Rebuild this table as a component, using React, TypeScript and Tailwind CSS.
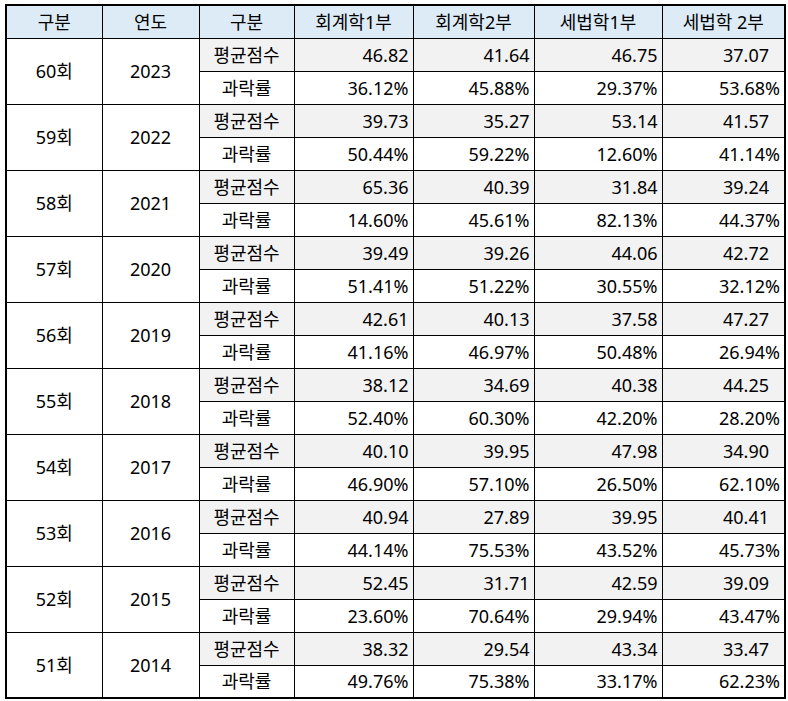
const rows = [
  ['60회', '2023', ['46.82', '41.64', '46.75', '37.07'], ['36.12%', '45.88%', '29.37%', '53.68%']],
  ['59회', '2022', ['39.73', '35.27', '53.14', '41.57'], ['50.44%', '59.22%', '12.60%', '41.14%']],
  ['58회', '2021', ['65.36', '40.39', '31.84', '39.24'], ['14.60%', '45.61%', '82.13%', '44.37%']],
  ['57회', '2020', ['39.49', '39.26', '44.06', '42.72'], ['51.41%', '51.22%', '30.55%', '32.12%']],
  ['56회', '2019', ['42.61', '40.13', '37.58', '47.27'], ['41.16%', '46.97%', '50.48%', '26.94%']],
  ['55회', '2018', ['38.12', '34.69', '40.38', '44.25'], ['52.40%', '60.30%', '42.20%', '28.20%']],
  ['54회', '2017', ['40.10', '39.95', '47.98', '34.90'], ['46.90%', '57.10%', '26.50%', '62.10%']],
  ['53회', '2016', ['40.94', '27.89', '39.95', '40.41'], ['44.14%', '75.53%', '43.52%', '45.73%']],
  ['52회', '2015', ['52.45', '31.71', '42.59', '39.09'], ['23.60%', '70.64%', '29.94%', '43.47%']],
  ['51회', '2014', ['38.32', '29.54', '43.34', '33.47'], ['49.76%', '75.38%', '33.17%', '62.23%']],
] as const

const headers = ['구분', '연도', '구분', '회계학1부', '회계학2부', '세법학1부', '세법학 2부']
const widths = ['w-[96px]', 'w-[97px]', 'w-[95px]', 'w-[119px]', 'w-[121px]', 'w-[128px]', 'w-[123px]']

export default function App() {
  return (
    <div className="min-h-screen bg-white pl-[5px] pt-[4px] font-['Noto_Sans','Noto_Sans_CJK_KR',sans-serif] text-[18px] text-black">
      <table className="table-fixed border-collapse border-2 border-black">
        <colgroup>
          {widths.map((w, i) => (
            <col key={i} className={w} />
          ))}
        </colgroup>
        <thead>
          <tr className="h-[33px] bg-[#ddebf7]">
            {headers.map((h, i) => (
              <th key={i} className="border border-black p-0 text-center font-normal leading-none">
                {h}
              </th>
            ))}
          </tr>
        </thead>
        <tbody>
          {rows.map(([round, year, avg, fail]) => (
            <>
              <tr key={round + 'a'} className="h-[33px]">
                <td rowSpan={2} className="border border-black p-0 text-center leading-none">
                  {round}
                </td>
                <td rowSpan={2} className="border border-black p-0 text-center leading-none">
                  {year}
                </td>
                <td className="border border-black bg-[#f2f2f2] p-0 text-center leading-none">평균점수</td>
                {avg.map((v, i) => (
                  <td
                    key={i}
                    className={
                      i === 3
                        ? 'border border-black bg-[#f2f2f2] py-0 pl-0 pr-[15px] text-right leading-none'
                        : 'border border-black bg-[#f2f2f2] py-0 pl-0 pr-[4px] text-right leading-none'
                    }
                  >
                    {v}
                  </td>
                ))}
              </tr>
              <tr key={round + 'b'} className="h-[33px]">
                <td className="border border-black p-0 text-center leading-none">과락률</td>
                {fail.map((v, i) => (
                  <td key={i} className="border border-black py-0 pl-0 pr-[4px] text-right leading-none">
                    {v}
                  </td>
                ))}
              </tr>
            </>
          ))}
        </tbody>
      </table>
    </div>
  )
}
